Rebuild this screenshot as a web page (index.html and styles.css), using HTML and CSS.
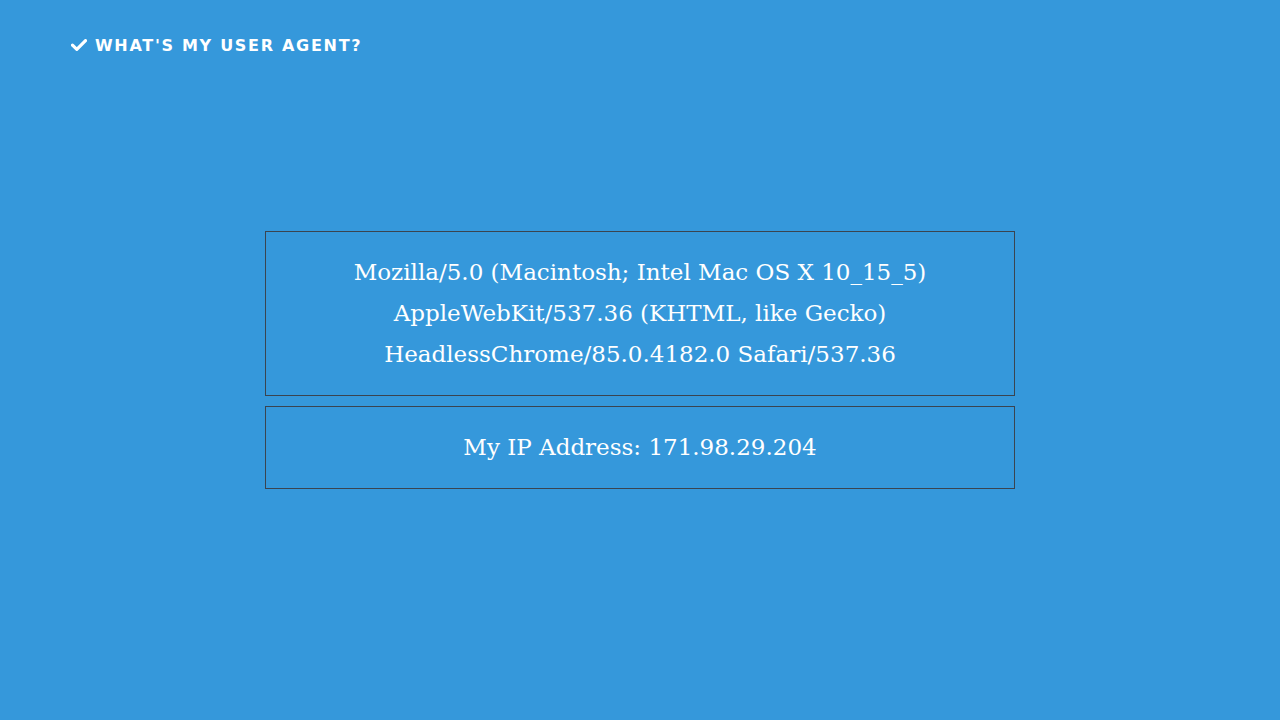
FILE: index.html
```html
<!DOCTYPE html>
<html>
<head>
<meta charset="utf-8">
<link rel="stylesheet" href="styles.css">
</head>
<body>
<header class="nav">
  <svg class="check" viewBox="0 0 16 12" width="16" height="12"><path d="M1.5 6.2 L5.8 10.3 L14.5 1.6" fill="none" stroke="#fff" stroke-width="3.2" stroke-linecap="round" stroke-linejoin="round"/></svg>
  <span class="title">WHAT'S MY USER AGENT?</span>
</header>
<main class="main">
  <div class="box">
    <div class="line">Mozilla/5.0 (Macintosh; Intel Mac OS X 10_15_5)</div>
    <div class="line">AppleWebKit/537.36 (KHTML, like Gecko)</div>
    <div class="line">HeadlessChrome/85.0.4182.0 Safari/537.36</div>
  </div>
  <div class="box">
    <div class="line">My IP Address: 171.98.29.204</div>
  </div>
</main>
</body>
</html>
```
FILE: styles.css
```css
html, body {
  margin: 0;
  padding: 0;
  height: 100%;
}
body {
  background: #3598db;
  color: #fff;
  position: relative;
}
.nav {
  position: absolute;
  top: 35px;
  left: 71px;
  display: flex;
  align-items: center;
  gap: 8px;
  height: 20px;
}
.check {
  display: block;
}
.title {
  font-family: "DejaVu Sans", sans-serif;
  font-weight: 700;
  font-size: 16px;
  letter-spacing: 1.7px;
}
.main {
  height: 100%;
  display: flex;
  flex-direction: column;
  align-items: center;
  justify-content: center;
  gap: 10px;
}
.box {
  box-sizing: border-box;
  width: 750px;
  border: 1px solid #3a4450;
  padding: 20px 10px;
  text-align: center;
  font-family: "DejaVu Serif", serif;
  font-size: 23px;
  line-height: 41px;
}
```
